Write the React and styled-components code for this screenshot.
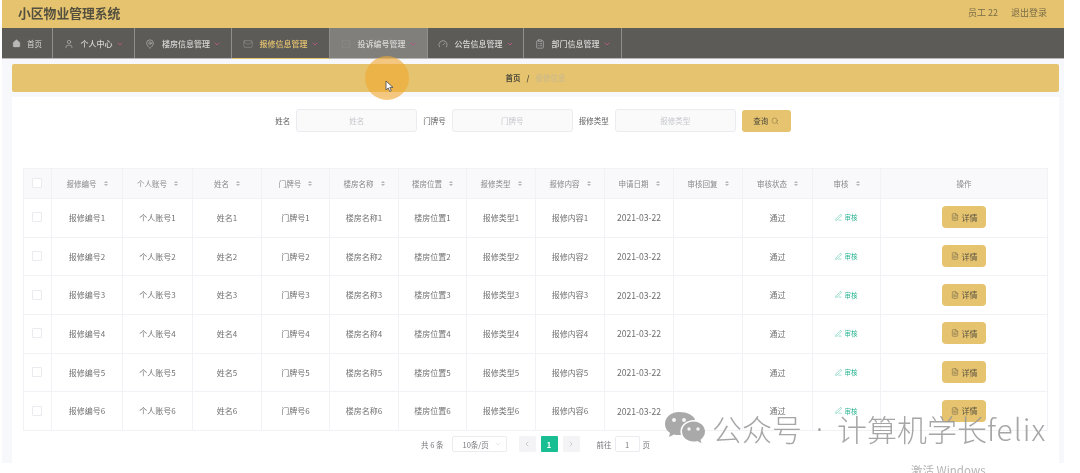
import React from "react";
import styled, { createGlobalStyle } from "styled-components";
import { Home, User, MapPin, Mail, SquareCheck, Gauge, ClipboardList, ChevronDown, ChevronLeft, ChevronRight, Search, FileText, PenLine } from "lucide-react";

const GlobalStyle = createGlobalStyle`
  html, body {
    margin: 0;
    padding: 0;
    background: #fff;
    overflow: hidden;
  }
  body {
    font-family: "Noto Sans CJK SC", "Noto Sans", sans-serif;
  }
`;

const navItems = [
  { label: "个人中心", icon: User, width: 82 },
  { label: "楼房信息管理", icon: MapPin, width: 97 },
  { label: "报修信息管理", icon: Mail, width: 98, active: true },
  { label: "投诉编号管理", icon: SquareCheck, width: 98, hover: true },
  { label: "公告信息管理", icon: Gauge, width: 96 },
  { label: "部门信息管理", icon: ClipboardList, width: 98 },
];

const columns = ["报修编号", "个人账号", "姓名", "门牌号", "楼房名称", "楼房位置", "报修类型", "报修内容", "申请日期", "审核回复", "审核状态", "审核"];
const rows = [1, 2, 3, 4, 5, 6];

const App = () => (
  <>
    <GlobalStyle />
    <Stage>
      <Page>
        <Header>
          <Title>小区物业管理系统</Title>
          <UserBox>
            <span>员工 22</span>
            <span>退出登录</span>
          </UserBox>
        </Header>
        <Nav>
          <HomeItem>
            <Home size={9} fill="#b9b8b6" strokeWidth={1} />
            首页
          </HomeItem>
          {navItems.map(item => (
            <NavItem key={item.label} $width={item.width} $active={item.active} $hover={item.hover}>
              <item.icon size={10} strokeWidth={1.6} />
              <span>{item.label}</span>
              <Caret size={8} strokeWidth={3} />
            </NavItem>
          ))}
        </Nav>
        <Content>
          <Breadcrumb>
            <b>首页</b>
            <Slash>/</Slash>
            <Current>报修信息</Current>
          </Breadcrumb>
          <Card>
            <SearchBar>
              <Label>姓名</Label>
              <Input>姓名</Input>
              <Label>门牌号</Label>
              <Input>门牌号</Input>
              <Label>报修类型</Label>
              <Input>报修类型</Input>
              <SearchButton>
                查询
                <Search size={8} strokeWidth={1.4} color="#7d6a3a" />
              </SearchButton>
            </SearchBar>
            <Table>
              <HeadRow>
                <Cell>
                  <Check />
                </Cell>
                {columns.map(col => (
                  <Cell key={col}>
                    {col}
                    <Sort>
                      <i />
                      <u />
                    </Sort>
                  </Cell>
                ))}
                <Cell>操作</Cell>
              </HeadRow>
              {rows.map(n => (
                <Row key={n}>
                  <Cell>
                    <Check />
                  </Cell>
                  <Cell>报修编号{n}</Cell>
                  <Cell>个人账号{n}</Cell>
                  <Cell>姓名{n}</Cell>
                  <Cell>门牌号{n}</Cell>
                  <Cell>楼房名称{n}</Cell>
                  <Cell>楼房位置{n}</Cell>
                  <Cell>报修类型{n}</Cell>
                  <Cell>报修内容{n}</Cell>
                  <DateCell>2021-03-22</DateCell>
                  <Cell />
                  <Cell>通过</Cell>
                  <Cell>
                    <Audit>
                      <PenLine size={7} strokeWidth={1.5} />
                      审核
                    </Audit>
                  </Cell>
                  <Cell>
                    <DetailButton>
                      <FileText size={8} strokeWidth={1.3} />
                      详情
                    </DetailButton>
                  </Cell>
                </Row>
              ))}
            </Table>
            <Pager>
              <span>共 6 条</span>
              <PageSize>
                10条/页
                <ChevronDown size={8} strokeWidth={1.2} color="#c0c4cc" />
              </PageSize>
              <PageNav>
                <PageBtn>
                  <ChevronLeft size={8} />
                </PageBtn>
                <PageBtn $current>1</PageBtn>
                <PageBtn>
                  <ChevronRight size={8} />
                </PageBtn>
              </PageNav>
              <Jump>
                前往
                <JumpInput>1</JumpInput>
                页
              </Jump>
            </Pager>
          </Card>
        </Content>
      </Page>
      <CursorGlow>
        <svg width="9" height="12" viewBox="0 0 9 12">
          <path d="M1 1v9l2.2-2 1.5 3.4 1.6-.7L4.8 7.4H8z" fill="#fff" stroke="#555" strokeWidth="0.9" />
        </svg>
      </CursorGlow>
      <Watermark>
        <svg width="42" height="34" viewBox="0 0 42 34">
          <path d="M15 1C7 1 1 6 1 13c0 4 2 7 5 9l-1 4 5-2.500c1.500.4 3 .6 5 .6 1 0 1.600 0 2-.1-.4-1.200-.6-2.400-.6-3.700C16.400 14 22.500 9 30 9c.5 0 1 0 1.300.1C29.800 4.400 23.200 1 15 1z" fill="#a9a9a9" />
          <path d="M41 20.500C41 14.700 35.600 10.500 29.500 10.500S18 14.700 18 20.500 23.400 30.500 29.500 30.500c1.500 0 2.700-.2 4-.6l4 2.300-1-3.500c2.800-2 4.500-4.900 4.500-8.200z" fill="#a9a9a9" />
          <circle cx="10" cy="9" r="2" fill="#f4f4f4" />
          <circle cx="20" cy="9" r="2" fill="#f4f4f4" />
          <circle cx="25" cy="18" r="1.700" fill="#f4f4f4" />
          <circle cx="34" cy="18" r="1.700" fill="#f4f4f4" />
        </svg>
        <WatermarkText>
          公众号<Dot>·</Dot>计算机学长<Latin>felix</Latin>
        </WatermarkText>
      </Watermark>
      <Activate>激活 Windows</Activate>
    </Stage>
  </>
);

const Stage = styled.div`
  position: relative;
  width: 1080px;
  height: 473px;
  overflow: hidden;
  background: #fff;
`;

const Page = styled.div`
  width: 1062px;
  height: 463px;
  margin-left: 2px;
  background: #f7f8fc;
  filter: blur(0.65px);
`;

const Header = styled.header`
  height: 28px;
  padding: 0 17px 3px 16px;
  display: flex;
  align-items: center;
  justify-content: space-between;
  box-sizing: border-box;
  background: #e5c36f;
`;

const Title = styled.div`
  font-size: 12.8px;
  font-weight: 700;
  color: #54503f;
`;

const UserBox = styled.div`
  display: flex;
  gap: 13px;
  font-size: 9px;
  color: #7a6c47;
`;

const Nav = styled.nav`
  height: 31px;
  display: flex;
  background: #5d5b58;
  border-bottom: 1px solid #b9b8b6;
  box-sizing: border-box;
`;

const HomeItem = styled.div`
  width: 51px;
  display: flex;
  align-items: center;
  justify-content: center;
  gap: 6px;
  padding-top: 1px;
  font-size: 7.5px;
  color: #d8d7d5;
  border-right: 1px solid #918f8d;
  box-sizing: border-box;
  svg {
    color: #b9b8b6;
  }
`;

const NavItem = styled.div`
  width: ${props => props.$width}px;
  display: flex;
  align-items: center;
  justify-content: center;
  gap: 7px;
  padding-top: 1px;
  font-size: 8px;
  font-weight: 500;
  box-sizing: border-box;
  border-right: 1px solid #918f8d;
  color: ${props => (props.$active ? "#e5c36f" : "#d8d7d5")};
  background: ${props => (props.$hover ? "#807f7c" : "transparent")};
  height: ${props => (props.$active ? "31px" : "30px")};
  ${props => props.$active && "border-bottom: 1px solid #e5c36f;"}
  svg:first-child {
    color: ${props => (props.$active || props.$hover ? "#8f8e8b" : "#b9b8b6")};
  }
`;

const Caret = styled(ChevronDown)`
  margin-left: -4px;
  color: #b0597f;
`;

const Content = styled.main`
  padding: 5px 5px 0 10px;
`;

const Breadcrumb = styled.div`
  height: 28px;
  padding-bottom: 1px;
  display: flex;
  align-items: center;
  justify-content: center;
  gap: 5px;
  box-sizing: border-box;
  border-radius: 2px;
  background: #e5c36f;
  font-size: 7.5px;
  color: #4e4a3c;
`;

const Slash = styled.span`
  font-weight: 700;
  padding: 0 1px;
`;

const Current = styled.span`
  color: #c9b98f;
`;

const Card = styled.section`
  height: 366px;
  margin-top: 5px;
  padding: 12px 11px 0;
  background: #fff;
  box-sizing: border-box;
`;

const SearchBar = styled.div`
  height: 23px;
  display: flex;
  align-items: center;
  justify-content: center;
  padding-right: 11px;
`;

const Label = styled.label`
  font-size: 7.5px;
  color: #5f5f5f;
  margin: 0 6px;
  white-space: nowrap;
`;

const Input = styled.div`
  width: 121px;
  height: 23px;
  display: flex;
  align-items: center;
  justify-content: center;
  box-sizing: border-box;
  border: 1px solid #ececf0;
  border-radius: 3px;
  background: #fafafb;
  font-size: 7.5px;
  color: #c6c7cc;
`;

const SearchButton = styled.button`
  width: 49px;
  height: 22px;
  margin-left: 6px;
  display: flex;
  align-items: center;
  justify-content: center;
  gap: 3px;
  padding: 0;
  border: 0;
  border-radius: 3px;
  background: #e5c36f;
  font: inherit;
  font-size: 7.5px;
  color: #4e4a3c;
`;

const Table = styled.div`
  margin-top: 36px;
  width: 1025px;
  border-top: 1px solid #f1f1f6;
  border-left: 1px solid #f1f1f6;
  box-sizing: border-box;
`;

const tracks = "28px 71px 70px 69px 68px 69px 68px 69px 69px 69px 69px 70px 68px 167px";

const Row = styled.div`
  height: 38.7px;
  display: grid;
  grid-template-columns: ${tracks};
  font-size: 8px;
  color: #707070;
  box-sizing: border-box;
  & > div:last-child {
    border-right: 1px solid #f1f1f6;
  }
`;

const HeadRow = styled(Row)`
  height: 30px;
  font-size: 7.5px;
  background: #f9f9fb;
  color: #88888d;
`;

const Cell = styled.div`
  display: flex;
  align-items: center;
  justify-content: center;
  gap: 7px;
  padding-bottom: 1px;
  box-sizing: border-box;
  border-right: 1px solid #f1f1f6;
  border-bottom: 1px solid #f1f1f6;
  white-space: nowrap;
`;

const DateCell = styled(Cell)`
  font-size: 8.6px;
`;

const Check = styled.span`
  width: 8px;
  height: 8px;
  margin-right: 2px;
  border: 1px solid #ebebef;
  border-radius: 1px;
  background: #fff;
`;

const Sort = styled.span`
  display: inline-flex;
  flex-direction: column;
  gap: 1px;
  i, u {
    width: 0;
    height: 0;
    border-left: 2px solid transparent;
    border-right: 2px solid transparent;
  }
  i {
    border-bottom: 2.5px solid #b4b4ba;
  }
  u {
    border-top: 2.5px solid #b4b4ba;
  }
`;

const Audit = styled.span`
  display: inline-flex;
  align-items: center;
  gap: 3px;
  margin-right: 1px;
  font-size: 6.5px;
  color: #2cb593;
`;

const DetailButton = styled.button`
  width: 44px;
  height: 22px;
  display: flex;
  align-items: center;
  justify-content: center;
  gap: 3px;
  padding: 0;
  border: 0;
  border-radius: 4px;
  background: #e5c36f;
  font: inherit;
  font-size: 8px;
  color: #5a5343;
`;

const Pager = styled.div`
  height: 26px;
  display: flex;
  align-items: center;
  padding-left: 398px;
  font-size: 7.5px;
  color: #77777c;
`;

const PageSize = styled.div`
  width: 55px;
  height: 16px;
  margin-left: 8px;
  padding: 0 4px 0 10px;
  display: flex;
  align-items: center;
  justify-content: space-between;
  box-sizing: border-box;
  border: 1px solid #ececf0;
  border-radius: 2px;
`;

const PageNav = styled.div`
  display: flex;
  gap: 5px;
  margin-left: 12px;
`;

const PageBtn = styled.div`
  width: 17px;
  height: 16px;
  display: flex;
  align-items: center;
  justify-content: center;
  border-radius: 1px;
  font-weight: 700;
  background: ${props => (props.$current ? "#19bf93" : "#f4f4f6")};
  color: ${props => (props.$current ? "#fff" : "#b8b8be")};
`;

const Jump = styled.div`
  display: flex;
  align-items: center;
  gap: 3px;
  margin-left: 17px;
`;

const JumpInput = styled.div`
  width: 25px;
  height: 16px;
  display: flex;
  align-items: center;
  justify-content: center;
  box-sizing: border-box;
  border: 1px solid #ececf0;
  border-radius: 2px;
`;

const CursorGlow = styled.div`
  position: absolute;
  left: 365px;
  top: 56px;
  width: 44px;
  height: 44px;
  padding: 17px 0 0 20px;
  box-sizing: border-box;
  border-radius: 50%;
  background: rgba(240, 170, 50, 0.62);
  filter: blur(0.4px);
`;

const Watermark = styled.div`
  position: absolute;
  left: 664px;
  top: 411px;
  display: flex;
  align-items: center;
  gap: 6px;
  filter: blur(0.4px);
`;

const WatermarkText = styled.span`
  display: flex;
  font-size: 30px;
  font-weight: 300;
  line-height: 34px;
  color: rgba(150, 150, 150, 0.85);
  white-space: nowrap;
`;

const Dot = styled.span`
  width: 35px;
  text-align: center;
  font-family: "Noto Sans", sans-serif;
`;

const Latin = styled.span`
  letter-spacing: 1px;
`;

const Activate = styled.div`
  position: absolute;
  left: 911px;
  top: 462px;
  font-size: 11.5px;
  color: #b5b5b5;
  white-space: nowrap;
  filter: blur(0.4px);
`;

export default App;
